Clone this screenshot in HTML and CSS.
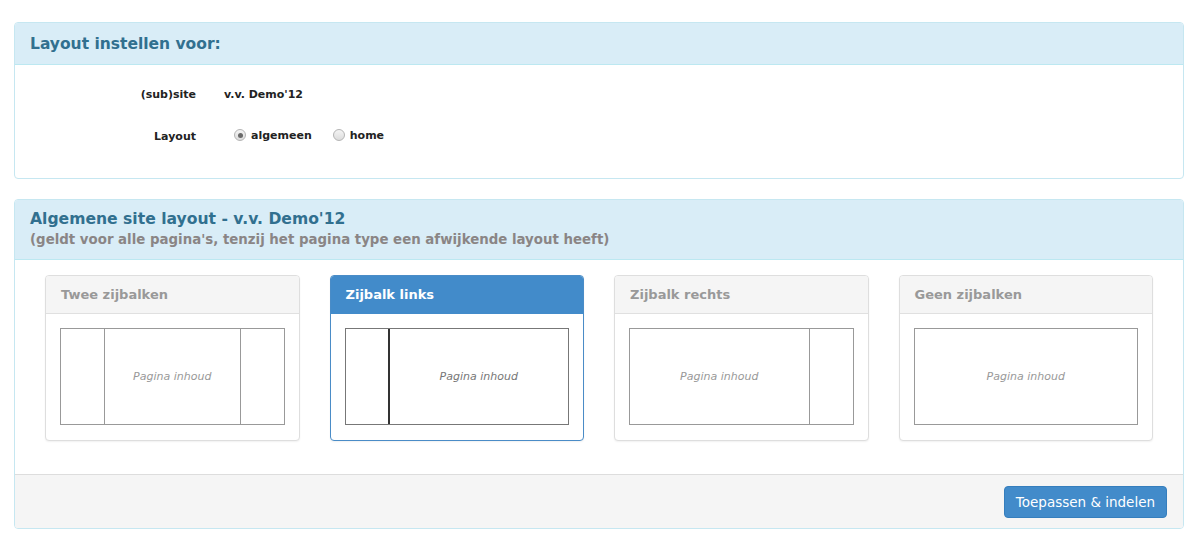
FILE: index.html
```html
<!DOCTYPE html>
<html lang="nl">
<head>
<meta charset="utf-8">
<title>Layout instellen</title>
<link rel="stylesheet" href="styles.css">
</head>
<body>
<div class="page">
  <section class="panel panel-top">
    <div class="panel-heading">
      <h2 class="title-main">Layout instellen voor:</h2>
    </div>
    <div class="panel-body form">
      <div class="form-row">
        <div class="label">(sub)site</div>
        <div class="value">v.v. Demo'12</div>
      </div>
      <div class="form-row form-row-radio">
        <div class="label">Layout</div>
        <div class="value radios">
          <label class="radio"><span class="radio-dot checked"></span>algemeen</label>
          <label class="radio"><span class="radio-dot"></span>home</label>
        </div>
      </div>
    </div>
  </section>

  <section class="panel panel-layouts">
    <div class="panel-heading heading-two">
      <h2 class="title-sub">Algemene site layout - v.v. Demo'12</h2>
      <div class="subtitle">(geldt voor alle pagina's, tenzij het pagina type een afwijkende layout heeft)</div>
    </div>
    <div class="panel-body cards">
      <div class="card">
        <div class="card-head">Twee zijbalken</div>
        <div class="card-body">
          <div class="diagram">
            <div class="side side-left"></div>
            <div class="main">Pagina inhoud</div>
            <div class="side side-right"></div>
          </div>
        </div>
      </div>
      <div class="card card-active">
        <div class="card-head">Zijbalk links</div>
        <div class="card-body">
          <div class="diagram">
            <div class="side side-left dark"></div>
            <div class="main">Pagina inhoud</div>
          </div>
        </div>
      </div>
      <div class="card">
        <div class="card-head">Zijbalk rechts</div>
        <div class="card-body">
          <div class="diagram">
            <div class="main">Pagina inhoud</div>
            <div class="side side-right"></div>
          </div>
        </div>
      </div>
      <div class="card">
        <div class="card-head">Geen zijbalken</div>
        <div class="card-body">
          <div class="diagram">
            <div class="main">Pagina inhoud</div>
          </div>
        </div>
      </div>
    </div>
    <div class="panel-footer">
      <button class="btn">Toepassen &amp; indelen</button>
    </div>
  </section>
</div>
</body>
</html>
```

FILE: styles.css
```css
* { box-sizing: border-box; }
html, body { margin: 0; padding: 0; background: #fff; }
body {
  font-family: "DejaVu Sans", Verdana, sans-serif;
  color: #222;
  font-size: 11px;
}
.page {
  padding: 22px 16px 0 14px;
  display: flex;
  flex-direction: column;
  gap: 20px;
}
.panel {
  border: 1px solid #c6e7f1;
  border-radius: 4px;
  background: #fff;
  overflow: hidden;
}
.panel-heading {
  background: #d9edf7;
  border-bottom: 1px solid #bce8f1;
  height: 42px;
  padding: 0 15px;
  display: flex;
  flex-direction: column;
  justify-content: center;
}
.title-main {
  margin: 0;
  font-size: 15.5px;
  font-weight: bold;
  color: #31708f;
}
.heading-two {
  height: 60px;
  padding-top: 0;
}
.title-sub {
  margin: 0;
  font-family: "DejaVu Sans", sans-serif;
  font-size: 15.6px;
  font-weight: bold;
  color: #31708f;
  line-height: 21px;
}
.subtitle {
  font-family: "DejaVu Sans", sans-serif;
  font-size: 13.35px;
  font-weight: bold;
  color: #8a8585;
  line-height: 20px;
}
.form {
  padding: 20px 0 34px 0;
  display: flex;
  flex-direction: column;
  gap: 23px;
}
.form-row {
  display: flex;
  align-items: center;
  height: 18px;
}
.label {
  width: 181px;
  text-align: right;
  font-weight: bold;
}
.value {
  margin-left: 28px;
  font-weight: bold;
}
.form-row-radio .label { padding-top: 2px; }
.radios {
  display: flex;
  gap: 21px;
  margin-left: 38px;
}
.radio {
  display: flex;
  align-items: center;
  gap: 5px;
}
.radio-dot {
  width: 12px;
  height: 12px;
  border-radius: 50%;
  border: 1px solid #b4b4b4;
  background: linear-gradient(#f4f4f4, #dcdcdc);
  position: relative;
}
.radio-dot.checked::after {
  content: "";
  position: absolute;
  left: 2.5px;
  top: 2.5px;
  width: 5px;
  height: 5px;
  border-radius: 50%;
  background: #6a6a6a;
}
.cards {
  padding: 15px 30px 33px 30px;
  display: flex;
  gap: 30px;
}
.card {
  flex: 1;
  border: 1px solid #dedede;
  border-radius: 4px;
  background: #fff;
  box-shadow: 0 1px 2px rgba(0,0,0,0.06);
  overflow: hidden;
}
.card-head {
  height: 38px;
  background: #f5f5f5;
  border-bottom: 1px solid #e0e0e0;
  padding: 0 15px;
  display: flex;
  align-items: center;
  font-size: 13px;
  font-weight: bold;
  color: #999;
}
.card-active { border-color: #4a8cc7; }
.card-active .card-head {
  background: #428bca;
  border-bottom-color: #428bca;
  color: #fff;
}
.card-body {
  padding: 14px 14px 15px 14px;
}
.diagram {
  height: 97px;
  border: 1px solid #999;
  display: flex;
}
.card-active .diagram { border-color: #777; }
.side {
  width: 44px;
  flex: none;
}
.side-left { border-right: 1px solid #999; }
.side-right { border-left: 1px solid #999; }
.side.dark { border-right: 2px solid #333; }
.main {
  flex: 1;
  display: flex;
  align-items: center;
  justify-content: center;
  font-style: italic;
  font-size: 11px;
  color: #999;
}
.card-active .main { color: #777; }
.panel-footer {
  background: #f5f5f5;
  border-top: 1px solid #ddd;
  height: 54px;
  padding: 0 16px;
  display: flex;
  align-items: center;
  justify-content: flex-end;
}
.btn {
  font-family: "DejaVu Sans", Verdana, sans-serif;
  font-size: 13.5px;
  color: #fff;
  background: #428bca;
  border: 1px solid #357ebd;
  border-radius: 4px;
  height: 32px;
  padding: 0 11px;
  margin-top: 1px;
}
```
